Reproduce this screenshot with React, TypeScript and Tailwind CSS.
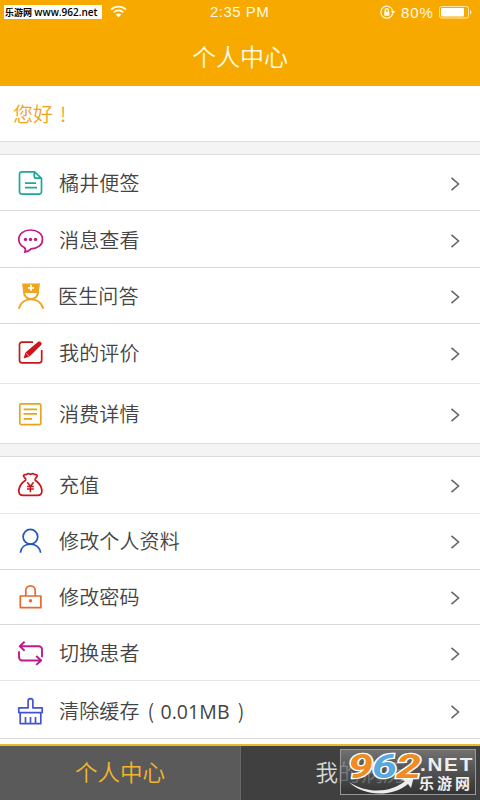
import type { ReactNode } from 'react'

type MenuItem = {
  label: ReactNode
  icon: ReactNode
  // 行高與分隔線
  className: string
}

const noteItems: MenuItem[] = [
  { label: '橘井便签', icon: <NoteIcon />, className: 'h-[56px] border-[#dadada]' },
  { label: '消息查看', icon: <MessageIcon />, className: 'h-[57px] pt-[2px] border-[#dadada]' },
  { label: <span className="-ml-px">医生问答</span>, icon: <DoctorIcon />, className: 'h-[56px] border-[#dadada]' },
  { label: '我的评价', icon: <EditIcon />, className: 'h-[60px] pb-[2px] border-[#e6e6e6]' },
  { label: '消费详情', icon: <BillIcon />, className: 'h-[59px] border-[#dadada]' },
]

const accountItems: MenuItem[] = [
  { label: '充值', icon: <MoneyIcon />, className: 'h-[57px] border-[#e6e6e6]' },
  { label: '修改个人资料', icon: <UserIcon />, className: 'h-[56px] pb-px border-[#dadada]' },
  { label: '修改密码', icon: <LockIcon />, className: 'h-[55px] border-[#dadada]' },
  { label: '切换患者', icon: <SwitchIcon />, className: 'h-[56px] border-[#e6e6e6]' },
  {
    label: (
      <>
        清除缓存<span className="ml-2">(</span>
        <span className="ml-[6px] mr-[8px] font-['Open_Sans'] text-[19.5px] font-normal tracking-[0.1px]">0.01MB</span>
        <span>)</span>
      </>
    ),
    icon: <BrushIcon />,
    className: 'h-[58px] pt-[3px] border-[#dadada]',
  },
]

export default function App() {
  return (
    <div className="w-[480px] h-[800px] flex flex-col overflow-hidden bg-white font-['Noto_Sans_CJK_SC',sans-serif] font-[350] text-[#444]">
      {/* 頂部導航 */}
      <header className="h-[86px] shrink-0 bg-[#f7a900] text-[#fffbe6]">
        <StatusBar />
        <h1 className="h-[60px] text-center text-2xl font-[350] leading-[59px]">个人中心</h1>
      </header>

      <div className="h-[55px] shrink-0 px-[13px] text-xl leading-[55px] text-[#f0a31c]">
        您好<span className="ml-[7px]">!</span>
      </div>
      <Gap />
      <MenuList items={noteItems} />
      <Gap />
      <MenuList items={accountItems} />

      {/* 底部標籤 */}
      <nav className="relative mt-[5px] h-[56px] shrink-0 flex border-t-2 border-[#eab72e] bg-[#404040] text-[22.5px] leading-[51px] text-center">
        <div className="w-[241px] border-r border-[#676767] bg-[#5a5a5a] text-[#f5b52c]">个人中心</div>
        <div className="flex-1 text-[#d8d8d8]">我的病历</div>
        <Watermark />
      </nav>
    </div>
  )
}

function StatusBar() {
  return (
    <div className="relative h-[26px] font-['Liberation_Sans',sans-serif] font-normal">
      <div className="absolute left-1 top-[5px] h-[14px] w-[98px] bg-white pl-px whitespace-nowrap font-['Open_Sans','Noto_Sans_CJK_SC',sans-serif] text-[9px] font-semibold leading-[14px] text-black">
        乐游网 <span className="text-[10px]">www.962.net</span>
      </div>
      <svg className="absolute left-[110px] top-[5px]" width="17" height="13" viewBox="0 0 17 13" fill="none" stroke="currentColor" strokeWidth="1.8">
        <path d="M1 4.6C5.2.5 11.8.5 16 4.6M3.7 7.4c2.7-2.6 6.9-2.6 9.6 0" />
        <path d="M5.8 9.6c1.5-1.4 3.9-1.4 5.4 0L8.5 12.4z" fill="currentColor" stroke="none" />
      </svg>
      <span className="absolute left-[210px] top-[3px] text-[15px] leading-[18px] tracking-[0.5px]">2:35 PM</span>
      <svg className="absolute left-[379px] top-[5px]" width="17" height="15" viewBox="0 0 17 15" fill="none" stroke="currentColor" strokeWidth="1.3">
        <path d="M13.6 8.8a6 6 0 1 1 0-3.3" />
        <path d="M11.8 6h4.6l-2.3 3z" fill="currentColor" stroke="none" />
        <path d="M5.2 6.7h5.2v4H5.2z" fill="currentColor" stroke="none" />
        <path d="M6.2 7V5.3a1.6 1.6 0 0 1 3.2 0V7" />
      </svg>
      <span className="absolute left-[401px] top-[4px] text-[15px] leading-[18px] tracking-[0.9px]">80%</span>
      <svg className="absolute left-[438px] top-[5px]" width="35" height="15" viewBox="0 0 35 15" fill="none">
        <rect x="1.5" y="1.5" width="29" height="11.5" rx="2" stroke="#ffe9a8" />
        <rect x="3" y="3" width="23" height="8.5" rx="1" fill="#fff" />
        <path d="M32 5c2 .6 2 4 0 4.6z" fill="#ffe9a8" />
      </svg>
    </div>
  )
}

function Gap() {
  return <div className="h-[14px] shrink-0 border-y border-[#dcdcdc] bg-[#f4f4f4]" />
}

function MenuList({ items }: { items: MenuItem[] }) {
  return (
    <ul className="shrink-0 [&:not(:last-of-type)>li:last-child]:border-b-0">
      {items.map((item, i) => (
        <li key={i} className={`flex items-center border-b ${item.className}`}>
          <span className="ml-4 w-7 flex justify-center">{item.icon}</span>
          <span className="ml-[15px] flex-1 text-xl leading-7 tracking-[0.15px]">{item.label}</span>
          <svg className="mr-[19px] mt-0.5" width="12" height="16" viewBox="0 0 12 16" fill="none" stroke="#666" strokeWidth="1.6">
            <path d="m2.5 1.8 7 6.2-7 6.2" />
          </svg>
        </li>
      ))}
    </ul>
  )
}

function Icon({ color, children }: { color: string; children: ReactNode }) {
  return (
    <svg width="28" height="28" viewBox="0 0 28 28" fill="none" stroke={color} strokeWidth="1.7" strokeLinejoin="round">
      {children}
    </svg>
  )
}

function NoteIcon() {
  return (
    <Icon color="#1fa79a">
      <path d="M18.5 2.8H6a2.5 2.5 0 0 0-2.5 2.5v17.4A2.5 2.5 0 0 0 6 25.2h17a2.5 2.5 0 0 0 2.5-2.5V9.3zM18.3 3v4.2a2 2 0 0 0 2 2h5M9 14.2h11M9 18.6h12" />
    </Icon>
  )
}

function MessageIcon() {
  return (
    <Icon color="#c4168b">
      <path d="M8 21.2C4.8 19.5 2.8 16.6 2.8 13.4 2.8 7.7 7.8 4 14.6 4S26.5 7.8 26.5 13.4s-5 9.3-11.5 9.5c-1.5 1.7-3.6 2.9-6.2 3.2 1-1.8 1.5-3.2-.8-4.9z" />
      <g fill="#c4168b" stroke="none">
        <circle cx="9.5" cy="13.4" r="1.7" />
        <circle cx="14.5" cy="13.4" r="1.7" />
        <circle cx="19.5" cy="13.4" r="1.7" />
      </g>
    </Icon>
  )
}

function DoctorIcon() {
  return (
    <Icon color="#efa51d">
      <path d="M6 1.5h18l-1.5 9.5h-15z" fill="#efa51d" stroke="none" />
      <path d="M7.9 9c0 4.6 2.8 8 7.1 8s7.1-3.4 7.1-8M2.8 26.7C4.3 20.8 9 17.2 15 17.2s10.7 3.6 12.2 9.5" strokeWidth="2" />
      <path d="M15 2.8v6M12 5.8h6" stroke="#fff" />
    </Icon>
  )
}

function EditIcon() {
  return (
    <Icon color="#cb151b">
      <path d="M17 3.2H6A2.5 2.5 0 0 0 3.5 5.7v15.6A2.5 2.5 0 0 0 6 23.8h17.2a2.5 2.5 0 0 0 2.5-2.5V11" />
      <path d="m7.6 19.6 1.8-6L22.2 2.8c1.8-1.2 4.5 1.4 3 3.3L13.5 17.6z" fill="#cb151b" stroke="none" />
      <path d="m9.6 13.5 3.8 4.1" stroke="#fff" strokeWidth=".6" />
    </Icon>
  )
}

function BillIcon() {
  return (
    <Icon color="#e6a51d">
      <rect x="3.8" y="3.8" width="21" height="20.8" rx="1.5" />
      <path d="M7.6 9.4H21M7.6 13.8H21M7.6 18.8h8.4" />
    </Icon>
  )
}

function MoneyIcon() {
  return (
    <Icon color="#c8161d">
      <path d="M10.2 8.7 7.6 5.2c-.5-1 .7-1.8 2-1.6 1.4.2 1.5-1 2.6-1.1 1.2 0 1.5.8 2.3.8s1.2-.8 2.4-.7c1.1.1 1.2 1.2 2.5 1 1.3-.1 2.2.7 1.7 1.6l-2.4 3.5M10.2 8.7C6 11.5 2.8 15.8 2.8 20c0 3 1.6 4.4 4.4 4.4h14.3c2.8 0 4.4-1.5 4.4-4.4 0-4.2-3.3-8.5-7.2-11.3" />
      <path d="m11.2 11.3 3.2 4 3.2-4M11 15.4h6.8M11 18.1h6.8M14.4 15.3v6" strokeWidth="1.5" />
    </Icon>
  )
}

function UserIcon() {
  return (
    <Icon color="#1f58bd">
      <circle cx="14.4" cy="9.7" r="7.3" />
      <path d="M4.4 25.8c.4-5.1 4.2-8.7 10-8.7s9.8 3.6 10.2 8.7" />
    </Icon>
  )
}

function LockIcon() {
  return (
    <Icon color="#e9692c">
      <path d="M4.3 13h20.6v11.7H4.3zM9.8 13V7.5a4.7 4.7 0 0 1 9.4 0V13" />
      <circle cx="14.5" cy="17.8" r="1.7" fill="#e9692c" stroke="none" />
    </Icon>
  )
}

function SwitchIcon() {
  return (
    <Icon color="#c3188d">
      <path d="M8.6 2.7 3.8 7.3l4.8 4.5M3.8 7.3h19a3.2 3.2 0 0 1 3.2 3.2v7.8M3 12.3v6a3.2 3.2 0 0 0 3.2 3.2h19M20.2 17l5 4.5-5 4.4" strokeWidth="1.9" />
    </Icon>
  )
}

function BrushIcon() {
  return (
    <Icon color="#4454d0">
      <path d="M12.1 10.9V4.1a2.4 2.4 0 0 1 4.8 0v6.8h9.3v4.7H2.8v-4.7zM4.2 15.6v11h20.6v-11M9.5 20v6.5M14.5 20v6.5M19.5 20v6.5" />
    </Icon>
  )
}

// 右下角水印
function Watermark() {
  return (
    <div className="absolute left-[340px] top-[3px] h-[46px] w-[136px] border border-[#999] bg-linear-to-b from-[#868686]/70 to-[#303030]/75">
      <svg className="block overflow-visible" width="134" height="44" viewBox="0 0 134 44">
        <path d="M8 32c18 12 42 11 56-1l-4-1 13-4-3 12-3-4c-17 14-45 12-59-2z" fill="#eee" />
        <g fontFamily="Roboto, sans-serif" fontSize="33" fontWeight="700" fontStyle="italic" stroke="#fff" strokeWidth="2.5" paintOrder="stroke">
          <text x="7" y="28" textLength="25" lengthAdjust="spacingAndGlyphs" fill="#f18a20">9</text>
          <text x="31" y="28" textLength="25" lengthAdjust="spacingAndGlyphs" fill="#58a9e0">6</text>
          <text x="55" y="28" textLength="25" lengthAdjust="spacingAndGlyphs" fill="#f18a20">2</text>
        </g>
        <text x="79" y="21" fontSize="18" fontFamily="Liberation Sans, sans-serif" fontWeight="bold" letterSpacing="1.5" textLength="54" lengthAdjust="spacingAndGlyphs" fill="#eee">.NET</text>
        <text x="78" y="39" fontSize="15" fontFamily="Noto Sans CJK SC, sans-serif" fontWeight="bold" textLength="51" fill="#eee">乐游网</text>
      </svg>
    </div>
  )
}
